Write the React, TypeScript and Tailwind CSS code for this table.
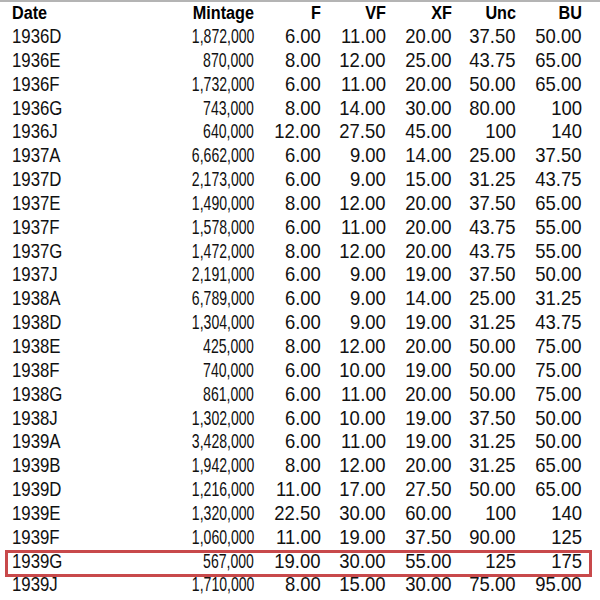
import React from "react"

type Row = [string, string, string, string, string, string, string]

const rows: Row[] = [
  ["1936D", "1,872,000", "6.00", "11.00", "20.00", "37.50", "50.00"],
  ["1936E", "870,000", "8.00", "12.00", "25.00", "43.75", "65.00"],
  ["1936F", "1,732,000", "6.00", "11.00", "20.00", "50.00", "65.00"],
  ["1936G", "743,000", "8.00", "14.00", "30.00", "80.00", "100"],
  ["1936J", "640,000", "12.00", "27.50", "45.00", "100", "140"],
  ["1937A", "6,662,000", "6.00", "9.00", "14.00", "25.00", "37.50"],
  ["1937D", "2,173,000", "6.00", "9.00", "15.00", "31.25", "43.75"],
  ["1937E", "1,490,000", "8.00", "12.00", "20.00", "37.50", "65.00"],
  ["1937F", "1,578,000", "6.00", "11.00", "20.00", "43.75", "55.00"],
  ["1937G", "1,472,000", "8.00", "12.00", "20.00", "43.75", "55.00"],
  ["1937J", "2,191,000", "6.00", "9.00", "19.00", "37.50", "50.00"],
  ["1938A", "6,789,000", "6.00", "9.00", "14.00", "25.00", "31.25"],
  ["1938D", "1,304,000", "6.00", "9.00", "19.00", "31.25", "43.75"],
  ["1938E", "425,000", "8.00", "12.00", "20.00", "50.00", "75.00"],
  ["1938F", "740,000", "6.00", "10.00", "19.00", "50.00", "75.00"],
  ["1938G", "861,000", "6.00", "11.00", "20.00", "50.00", "75.00"],
  ["1938J", "1,302,000", "6.00", "10.00", "19.00", "37.50", "50.00"],
  ["1939A", "3,428,000", "6.00", "11.00", "19.00", "31.25", "50.00"],
  ["1939B", "1,942,000", "8.00", "12.00", "20.00", "31.25", "65.00"],
  ["1939D", "1,216,000", "11.00", "17.00", "27.50", "50.00", "65.00"],
  ["1939E", "1,320,000", "22.50", "30.00", "60.00", "100", "140"],
  ["1939F", "1,060,000", "11.00", "19.00", "37.50", "90.00", "125"],
  ["1939G", "567,000", "19.00", "30.00", "55.00", "125", "175"],
  ["1939J", "1,710,000", "8.00", "15.00", "30.00", "75.00", "95.00"],
]

const headers = ["Date", "Mintage", "F", "VF", "XF", "Unc", "BU"]
const widths = ["w-[120px]", "w-[122px]", "w-[67px]", "w-[65px]", "w-[66px]", "w-[64px]", "w-[66px]"]

// the print face is a condensed grotesque; squeeze Liberation Sans per column
const dataScale = ["scale-x-[0.8] origin-left", "scale-x-[0.67] origin-right", "scale-x-[0.88] origin-right"]

function Cells({ cells, header }: { cells: string[]; header?: boolean }) {
  return (
    <>
      {cells.map((c, i) => {
        const squeeze = header
          ? i === 0
            ? "scale-x-[0.9] origin-left"
            : "scale-x-[0.9] origin-right"
          : dataScale[Math.min(i, 2)]
        return (
          <div key={i} className={`${widths[i]} shrink-0 whitespace-nowrap ${i === 0 ? "text-left" : "text-right"}`}>
            <span className={`inline-block ${squeeze}`}>{c}</span>
          </div>
        )
      })}
    </>
  )
}

export default function App() {
  return (
    <div
      className="w-[600px] h-[600px] overflow-hidden bg-white text-[#111111] border-t-2 border-[#b4b4b4]"
      style={{ fontFamily: '"Liberation Sans", Arial, sans-serif' }}
    >
      <div className="flex h-[22px] items-center pl-[12px] text-[18px] leading-[22px] font-bold text-black">
        <Cells cells={headers} header />
      </div>
      {rows.map((r) => (
        <div key={r[0]} className="relative flex h-[23.85px] items-center pl-[12px] text-[21px] leading-[23.85px]">
          <Cells cells={r} />
          {r[0] === "1939G" && (
            <span className="pointer-events-none absolute left-[5px] right-[8px] top-[1px] h-[27px] border-[3px] border-[#c8494b]" />
          )}
        </div>
      ))}
    </div>
  )
}
